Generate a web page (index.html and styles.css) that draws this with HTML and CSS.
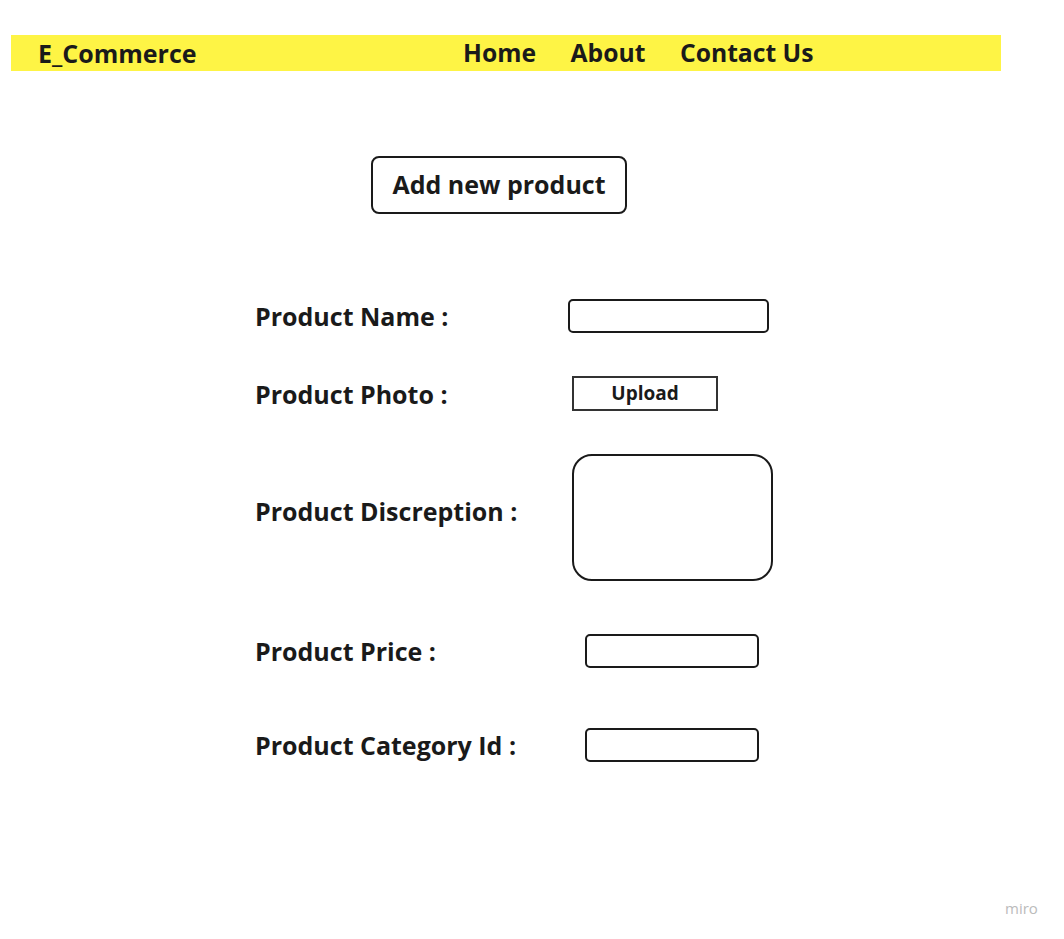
FILE: index.html
```html
<!DOCTYPE html>
<html>
<head>
	<meta charset="UTF-8">
	<title>Add new product</title>
	<link rel="stylesheet" href="styles.css">
</head>
<body>
	<div class="topbar">
		<span class="logo">E_Commerce</span>
		<ul class="nav">
			<li>Home</li>
			<li>About</li>
			<li>Contact Us</li>
		</ul>
	</div>

	<div class="title">Add new product</div>

	<div class="form">
		<div class="row row-name">
			<span class="label">Product Name :</span>
			<span class="field field-name"></span>
		</div>
		<div class="row row-photo">
			<span class="label">Product Photo :</span>
			<span class="upload">Upload</span>
		</div>
		<div class="row row-desc">
			<span class="label">Product Discreption :</span>
			<span class="area"></span>
		</div>
		<div class="row row-price">
			<span class="label">Product Price :</span>
			<span class="field field-short"></span>
		</div>
		<div class="row row-cat">
			<span class="label">Product Category Id :</span>
			<span class="field field-short"></span>
		</div>
	</div>

	<div class="mark">miro</div>
</body>
</html>
```

FILE: styles.css
```css
*{margin:0;padding:0;box-sizing:border-box;}
li{list-style:none;}
body{
	font-family:"Open Sans","Noto Sans",sans-serif;
	font-weight:700;
	color:#1a1a1a;
	background:#fff;
	width:1064px;
	height:939px;
	position:relative;
}
.topbar{
	margin:35px 0 0 11px;
	width:990px;
	height:36px;
	background:#fef445;
	display:flex;
	align-items:center;
	padding-left:27px;
	font-size:25px;
	line-height:34px;
}
.logo{
	width:425px;
}
.nav{
	display:flex;
	gap:34.5px;
	font-size:24.7px;
}
.title{
	margin:85px 0 0 371px;
	width:256px;
	height:58px;
	border:2px solid #1a1a1a;
	border-radius:8px;
	display:flex;
	align-items:center;
	justify-content:center;
	font-size:25px;
	line-height:34px;
	padding-bottom:3px;
}
.form{
	margin-top:85px;
	padding-left:255px;
}
.row{
	display:flex;
	align-items:center;
}
.label{
	font-size:25px;
	line-height:34px;
	width:313px;
}
.row-photo{margin-top:43px;}
.row-desc{margin-top:43px;}
.row-price{margin-top:53px;}
.row-cat{margin-top:60px;}
.row-desc .label{margin-bottom:14px;}
.field{
	display:block;
	height:34px;
	border:2px solid #1a1a1a;
	border-radius:5px;
}
.field-name{width:201px;}
.field-short{
	width:174px;
	margin-left:17px;
}
.upload{
	display:flex;
	align-items:center;
	justify-content:center;
	margin-left:4px;
	width:146px;
	height:35px;
	border:2px solid #333;
	font-size:19px;
	padding-bottom:1px;
}
.area{
	display:block;
	margin-left:4px;
	width:201px;
	height:127px;
	border:2px solid #1a1a1a;
	border-radius:20px;
}
.mark{
	position:absolute;
	left:1005px;
	top:898px;
	font-size:15px;
	font-weight:400;
	color:#bbb;
}
```
